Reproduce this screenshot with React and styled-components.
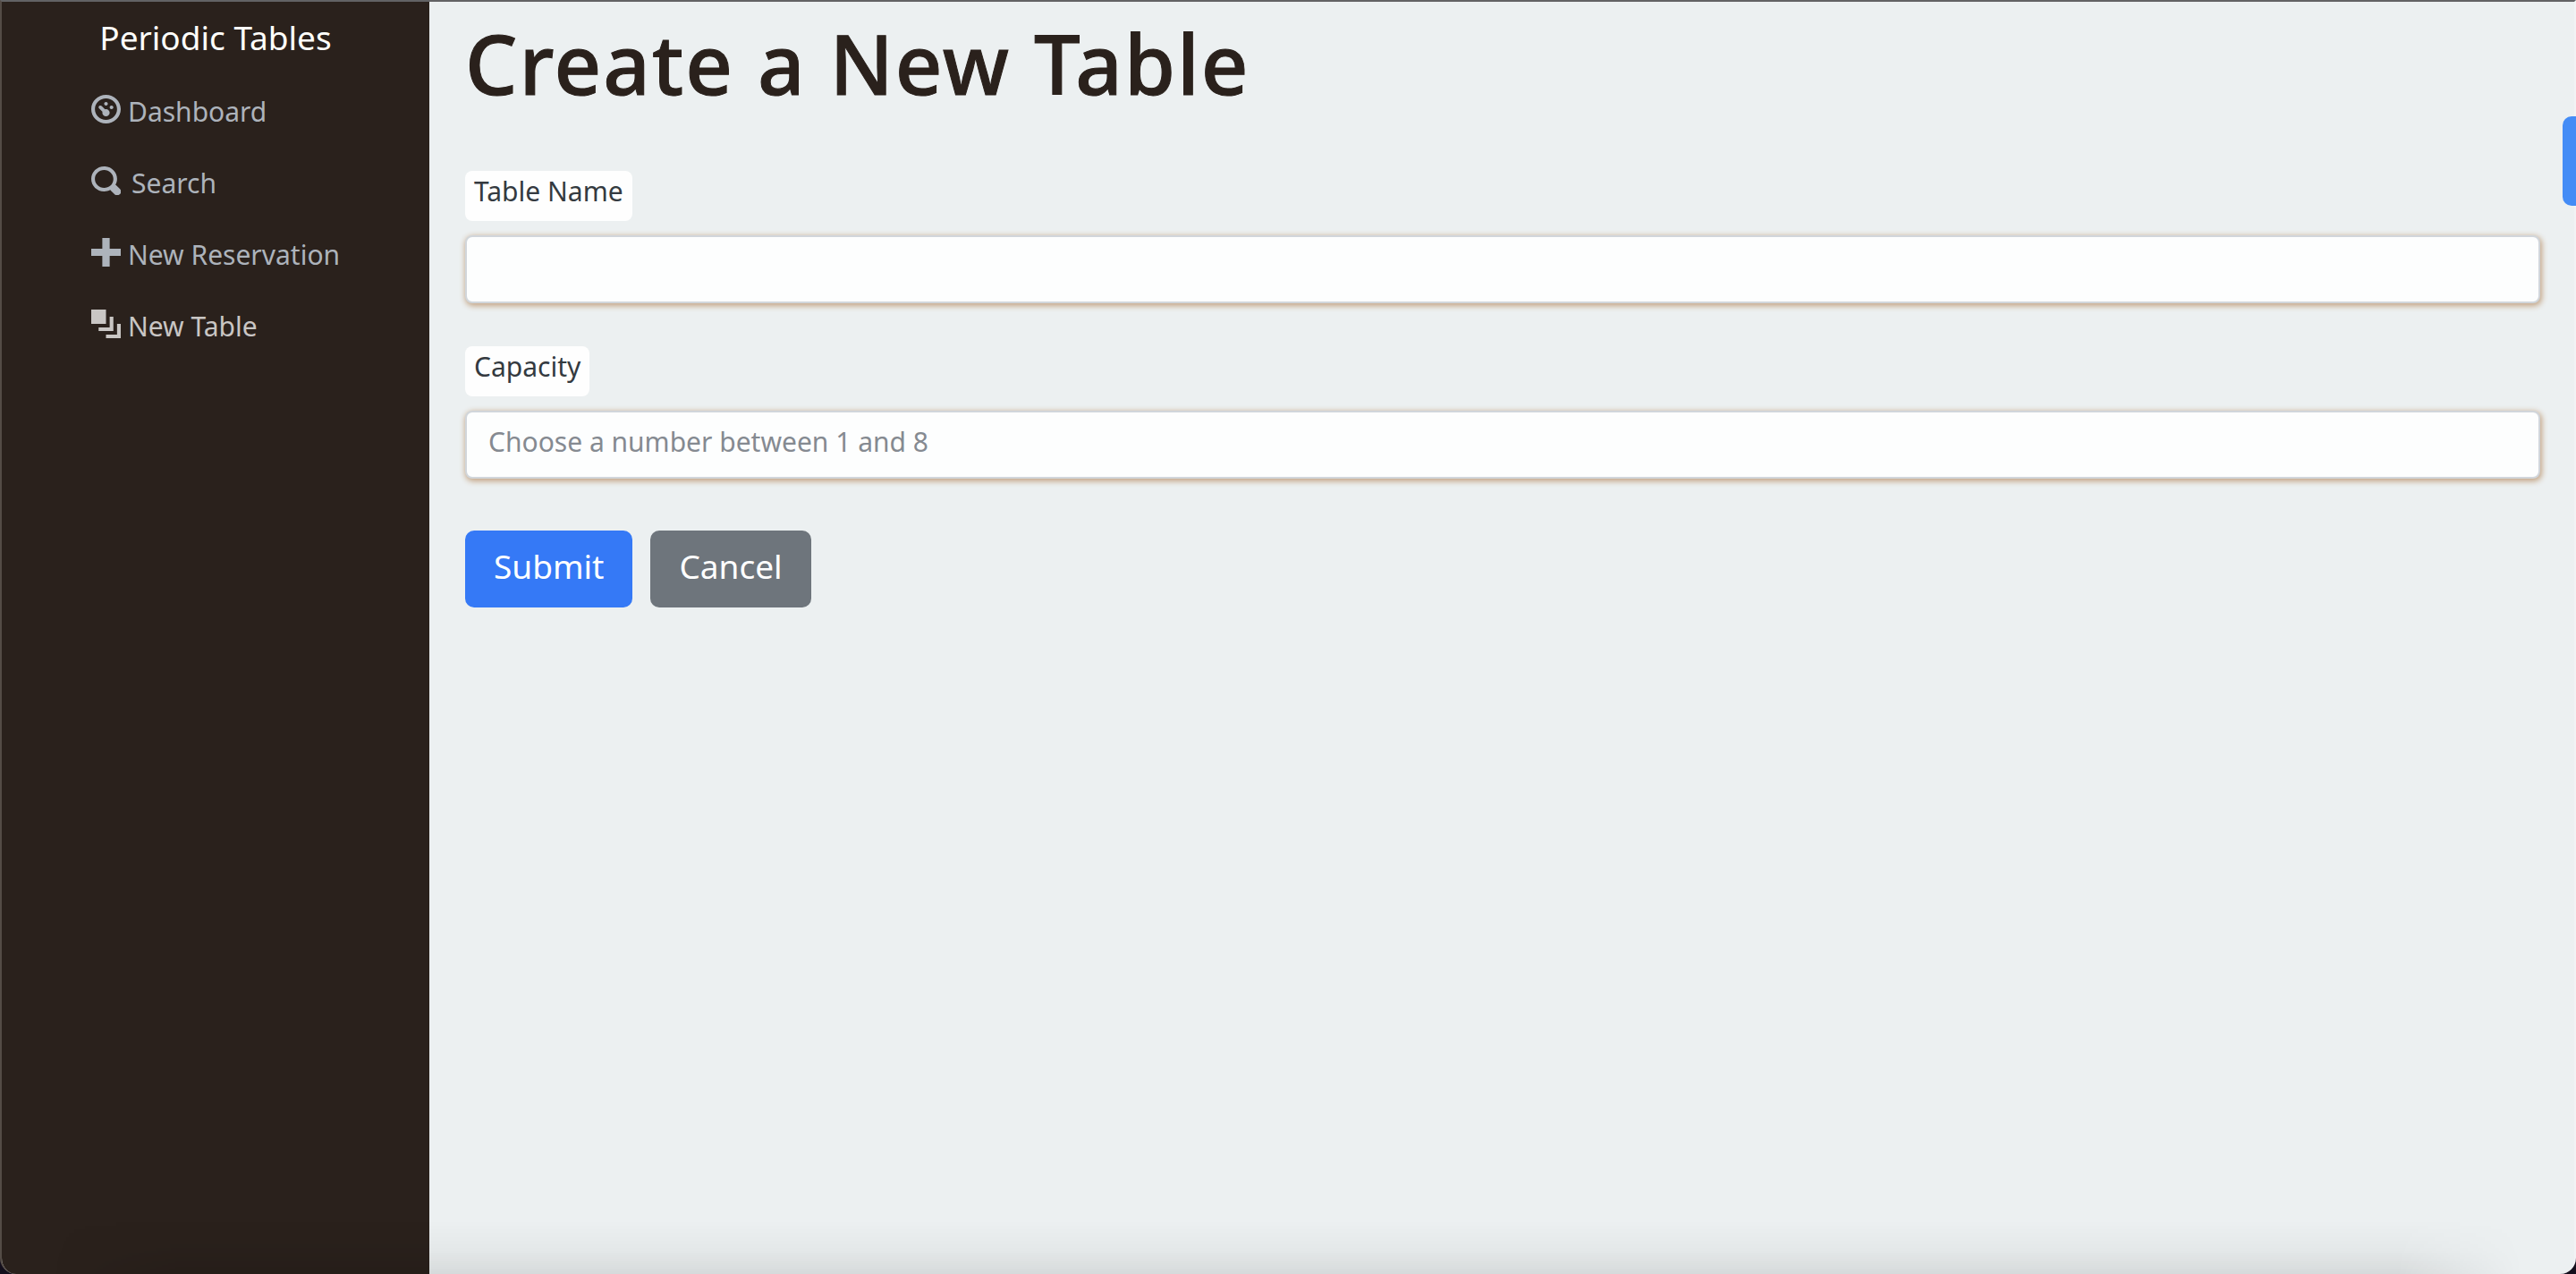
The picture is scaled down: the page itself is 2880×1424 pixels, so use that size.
import React from "react";
import styled, { createGlobalStyle } from "styled-components";

const GlobalStyle = createGlobalStyle`
  *, *::before, *::after { box-sizing: border-box; }
  body {
    margin: 0;
    background: #140f1c;
    font-family: "Noto Sans", sans-serif;
    font-size: 30px;
    line-height: 40px;
    color: #343a40;
  }
`;

const Shell = styled.div`
  display: grid;
  grid-template-columns: 478px 1fr;
  min-height: 100vh;
  overflow: hidden;
  background: #ecf0f1;
  border-top: 2px solid #626264;
  border-left: 2px solid #544c46;
  border-right: 2px solid #f2f3f5;
  border-radius: 0 0 18px 18px;
`;

const Sidebar = styled.nav`
  display: flex;
  flex-direction: column;
  background: #2a211c;
`;

const Brand = styled.a`
  padding: 14px 0;
  text-align: center;
  font-size: 37px;
  line-height: 52px;
  color: #fffffb;
  text-decoration: none;
`;

const NavList = styled.ul`
  display: flex;
  flex-direction: column;
  margin: 0;
  padding: 0 0 0 100px;
  list-style: none;
`;

const NavLink = styled.a`
  display: flex;
  gap: ${(p) => (p.$wide ? 12 : 8)}px;
  height: 80px;
  padding-top: 22px;
  color: ${(p) => (p.$active ? "#c9c6c4" : "#adb3bb")};
  text-decoration: none;
`;

const Icon = styled.svg`
  flex: none;
  width: 33px;
  height: 32px;
  margin-top: 2px;
  fill: currentColor;
`;

const NavText = styled.span`
  padding-top: 1px;
`;

const Main = styled.main`
  padding: 6px 38px 0 40px;
`;

const Title = styled.h1`
  margin: 0;
  font-size: 92px;
  font-weight: 500;
  line-height: 126px;
  letter-spacing: 2px;
  -webkit-text-stroke: 1px currentColor;
  color: #2a211c;
`;

const Form = styled.form`
  display: flex;
  flex-direction: column;
  padding-top: 57px;
`;

const Field = styled.div`
  display: flex;
  flex-direction: column;
  align-items: flex-start;
  gap: 16px;
  margin-bottom: 48px;
`;

const Label = styled.label`
  height: 56px;
  padding: 3px 10px;
  border-radius: 8px;
  background: #fefefe;
`;

const Input = styled.input`
  width: 100%;
  height: 76px;
  padding: 8px 24px 16px;
  border: 2px solid #d1d6db;
  border-radius: 8px;
  background: #fdfefe;
  box-shadow: 1px 2px 6px 1px #c4a484;
  font: inherit;
  color: #495057;
  outline: none;
  &::placeholder { color: #858a91; opacity: 1; }
`;

const Actions = styled.div`
  display: flex;
  gap: 20px;
  padding-top: 10px;
`;

const Button = styled.button`
  height: 86px;
  padding: 0 32px 6px;
  border: 0;
  border-radius: 10px;
  background: ${(p) => (p.$primary ? "#3579f6" : "#6e757c")};
  color: #fff;
  font: inherit;
  font-size: 37px;
  line-height: 52px;
`;

const SideHandle = styled.button`
  position: absolute;
  top: 130px;
  right: 0;
  width: 15px;
  height: 100px;
  padding: 0;
  border: 0;
  border-radius: 10px 0 0 10px;
  background: #448cf6;
`;

const BottomShade = styled.div`
  position: absolute;
  left: 60px;
  right: 60px;
  bottom: 0;
  height: 60px;
  pointer-events: none;
  background: linear-gradient(to top, rgba(0, 0, 0, 0.09), rgba(0, 0, 0, 0.03) 45%, transparent);
  mask-image: linear-gradient(to right, transparent, #000 140px, #000 calc(100% - 140px), transparent);
`;

const LINKS = [
  { text: "Dashboard", d: "M4 0c-2.2 0-4 1.8-4 4s1.8 4 4 4 4-1.8 4-4-1.8-4-4-4zm0 1c1.66 0 3 1.34 3 3s-1.34 3-3 3-3-1.34-3-3 1.34-3 3-3zm0 1c-.28 0-.5.22-.5.5s.22.5.5.5.5-.22.5-.5-.22-.5-.5-.5zm-1.66 1a.5.5 0 0 0-.19.84l.91.91c-.02.08-.06.16-.06.25 0 .55.45 1 1 1s1-.45 1-1-.45-1-1-1c-.09 0-.17.04-.25.06l-.91-.91a.5.5 0 0 0-.44-.16.5.5 0 0 0-.06 0zm3.16 0c-.28 0-.5.22-.5.5s.22.5.5.5.5-.22.5-.5-.22-.5-.5-.5z" },
  { text: "Search", wide: true, d: "M3.5 0c-1.93 0-3.5 1.57-3.5 3.5s1.57 3.5 3.5 3.5c.59 0 1.17-.14 1.66-.41a1 1 0 0 0 .13.13l1 1a1.02 1.02 0 1 0 1.44-1.44l-1-1a1 1 0 0 0-.16-.13c.27-.49.44-1.06.44-1.66 0-1.93-1.55-3.5-3.5-3.5zm0 1c1.39 0 2.5 1.11 2.5 2.5 0 .66-.24 1.27-.66 1.72-.01.01-.02.02-.03.03a1 1 0 0 0-.13.13c-.44.4-1.04.63-1.69.63-1.39 0-2.5-1.11-2.5-2.5s1.11-2.5 2.5-2.5z" },
  { text: "New Reservation", d: "M3 0v3h-3v2h3v3h2v-3h3v-2h-3v-3h-2z" },
  { text: "New Table", active: true, d: "M0 0v4h4v-4h-4zm5 2v3h-3v1h4v-4h-1zm2 2v3h-3v1h4v-4h-1z" },
];

export default function App() {
  return (
    <>
      <GlobalStyle />
      <Shell>
        <Sidebar>
          <Brand href="#">Periodic Tables</Brand>
          <NavList>
            {LINKS.map((l) => (
              <li key={l.text}>
                <NavLink href="#" $active={l.active} $wide={l.wide}>
                  <Icon viewBox="0 0 8 8" preserveAspectRatio="none" aria-hidden="true"><path d={l.d} /></Icon>
                  <NavText>{l.text}</NavText>
                </NavLink>
              </li>
            ))}
          </NavList>
        </Sidebar>
        <Main>
          <Title>Create a New Table</Title>
          <Form onSubmit={(e) => e.preventDefault()}>
            <Field>
              <Label htmlFor="table_name">Table Name</Label>
              <Input id="table_name" type="text" />
            </Field>
            <Field>
              <Label htmlFor="capacity">Capacity</Label>
              <Input id="capacity" type="text" inputMode="numeric" placeholder="Choose a number between 1 and 8" />
            </Field>
            <Actions>
              <Button type="submit" $primary>Submit</Button>
              <Button type="button">Cancel</Button>
            </Actions>
          </Form>
        </Main>
      </Shell>
      <BottomShade />
      <SideHandle type="button" aria-label="Open side panel" />
    </>
  );
}
